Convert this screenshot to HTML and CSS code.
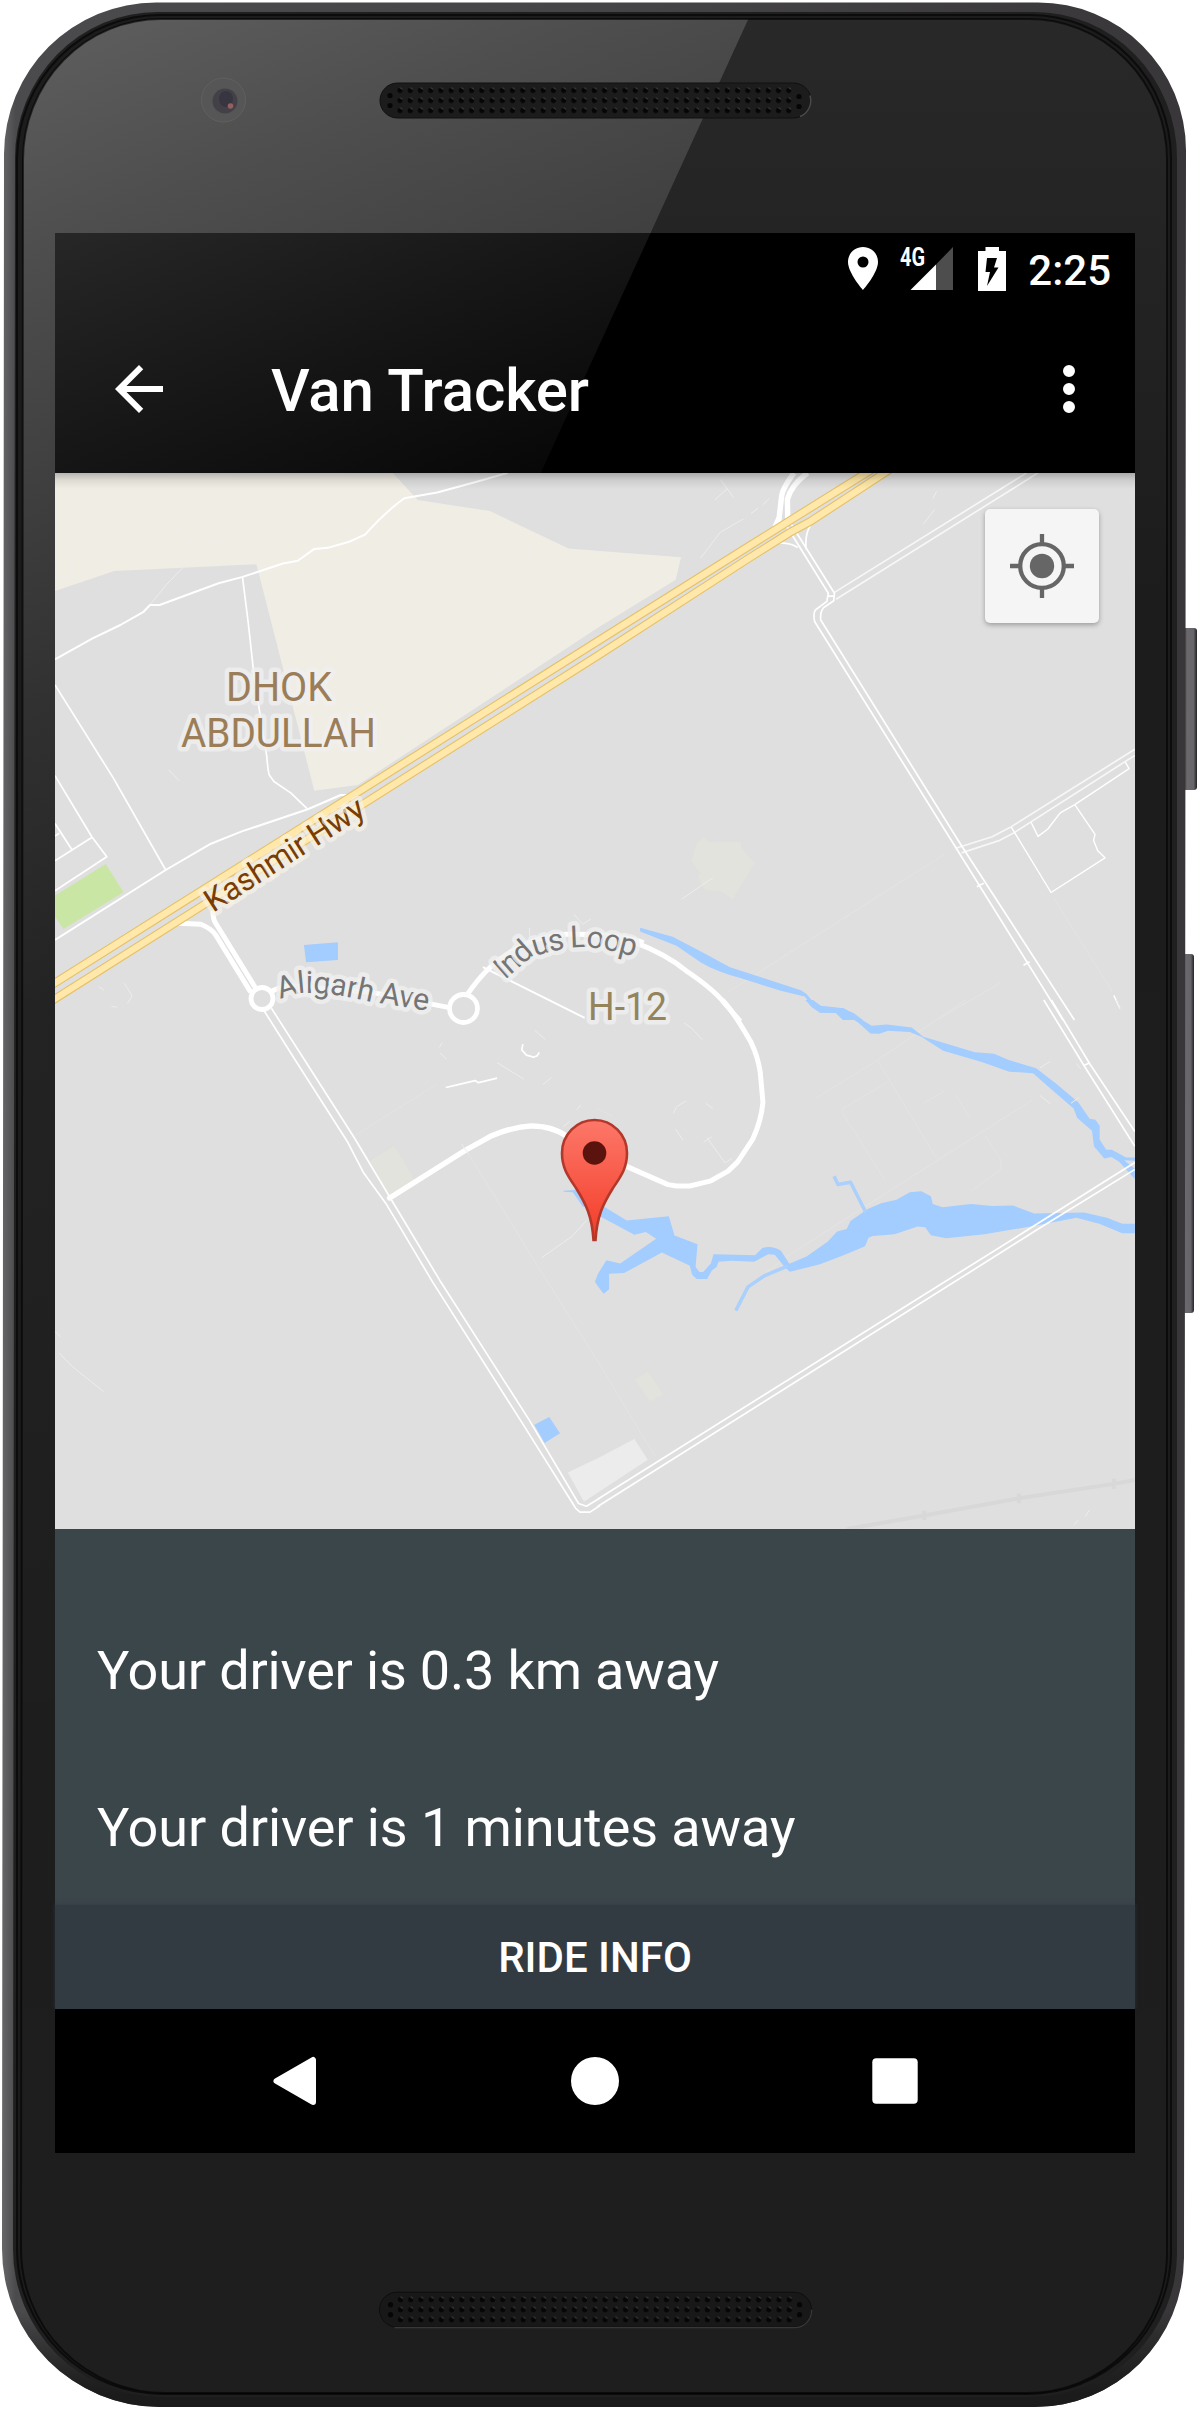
FILE: index.html
```html
<!DOCTYPE html>
<html lang="en">
<head>
<meta charset="utf-8">
<title>Van Tracker</title>
<link rel="stylesheet" href="styles.css">
</head>
<body>
<main class="phone">
  <svg class="phone-body" viewBox="0 0 1198 2409" aria-hidden="true">
    <defs>
      <linearGradient id="metal" gradientUnits="userSpaceOnUse" x1="0" y1="0" x2="1198" y2="0">
        <stop offset="0" stop-color="#6b6a6c"/><stop offset=".013" stop-color="#4b4a4c"/><stop offset=".5" stop-color="#454446"/><stop offset="1" stop-color="#383638"/>
      </linearGradient>
      <linearGradient id="foot" x1="0" y1="0" x2="0" y2="1">
        <stop offset=".96" stop-color="#111" stop-opacity="0"/><stop offset=".995" stop-color="#1c1b1c"/>
      </linearGradient>
      <linearGradient id="glass" x1="0" y1="0" x2="0" y2="1">
        <stop offset="0" stop-color="#292929"/><stop offset=".25" stop-color="#1c1c1c"/><stop offset="1" stop-color="#1e1e1f"/>
      </linearGradient>
      <linearGradient id="sheen" gradientUnits="userSpaceOnUse" x1="0" y1="0" x2="562" y2="1390">
        <stop offset="0" stop-color="#606061"/><stop offset=".052" stop-color="#5b5b5c"/><stop offset=".162" stop-color="#4e4e4f"/><stop offset=".293" stop-color="#414142"/><stop offset=".444" stop-color="#313132"/><stop offset=".633" stop-color="#232323"/><stop offset="1" stop-color="#1e1e1f"/>
      </linearGradient>
      <linearGradient id="key" x1="0" y1="0" x2="1" y2="0">
        <stop offset="0" stop-color="#3a383a"/><stop offset=".3" stop-color="#6c696d"/><stop offset=".75" stop-color="#67646a"/><stop offset="1" stop-color="#242324"/>
      </linearGradient>
      <pattern id="holes" patternUnits="userSpaceOnUse" x="394.9" y="85.3" width="10.23" height="10.05">
        <circle cx="5.1" cy="5.1" r="2.6" fill="#060606"/><path d="M5 2.6a2.4 2.4 0 0 1 2.3 1.7" fill="none" stroke="#3e3e3e" stroke-width="1"/>
      </pattern>
      <clipPath id="glass-clip"><path d="M23 160A138 141 0 0 1 161 19H1027A138 141 0 0 1 1167 160V2253A140 140 0 0 1 1027 2393H165A144 144 0 0 1 21 2249Z"/></clipPath>
    </defs>
    <rect x="1183" y="628" width="14" height="162" rx="3" fill="url(#key)"/>
    <rect x="1181" y="954" width="13" height="359" rx="3" fill="url(#key)"/>
    <path d="M4 154A152 152 0 0 1 156 2.500H1038A148 148 0 0 1 1186 150L1184 2258A150 150 0 0 1 1034 2407H160A158 158 0 0 1 2 2249Z" fill="url(#metal)"/>
    <path d="M4 154A152 152 0 0 1 156 2.500H1038A148 148 0 0 1 1186 150L1184 2258A150 150 0 0 1 1034 2407H160A158 158 0 0 1 2 2249Z" fill="url(#foot)"/>
    <path d="M15 158A143 146 0 0 1 158 12H1034A143 146 0 0 1 1177 158V2253A146 144 0 0 1 1031 2397H161A148 148 0 0 1 13 2249Z" fill="#1f1f1f"/>
    <path d="M17 158A143 145 0 0 1 160 15H1030A141 144 0 0 1 1171 158V2253A143 143 0 0 1 1028 2394H163A146 146 0 0 1 17 2249Z" fill="#1c1c1c" stroke="#0c0c0c" stroke-width="2"/>
    <g clip-path="url(#glass-clip)">
      <rect width="1198" height="2409" fill="url(#glass)"/>
      <path d="M0 0H757L100 1438V1700H0Z" fill="url(#sheen)"/>
    </g>
    <path d="M23 160A138 141 0 0 1 161 19H1027A138 141 0 0 1 1167 160V2253A140 140 0 0 1 1027 2393H165A144 144 0 0 1 21 2249Z" fill="none" stroke="#000" stroke-opacity=".6" stroke-width="2"/>
    <circle cx="223.500" cy="100" r="22" fill="#565657" stroke="#606061" stroke-width="1"/>
    <circle cx="225" cy="101" r="12.500" fill="#434147"/><ellipse cx="226" cy="99" rx="7" ry="8" fill="#37353f"/><circle cx="230.500" cy="106" r="2.800" fill="#94605f"/>
    <rect x="380" y="83" width="431" height="35" rx="17.500" fill="#1c1c1c" stroke="#101010"/>
    <path d="M800 116.500a17 17 0 0 0 10-21" fill="none" stroke="#484b4e" stroke-width="1.500"/>
    <rect x="394.900" y="85.300" width="399" height="30.150" fill="url(#holes)"/>
    <g fill="#060606"><circle cx="390" cy="95.500" r="2.600"/><circle cx="390" cy="105.500" r="2.600"/><circle cx="799" cy="96.500" r="2.600"/><circle cx="799" cy="106.500" r="2.600"/></g>
    <g transform="translate(.5 2209.200)">
      <rect x="379" y="83" width="432" height="35" rx="17.500" fill="#181818" stroke="#0e0e0e"/>
      <path d="M394 118.500H794a17 17 0 0 0 17-18" fill="none" stroke="#383839" stroke-width="1.300"/>
      <rect x="394.900" y="85.300" width="399" height="30.150" fill="url(#holes)"/>
      <g fill="#060606"><circle cx="390" cy="95.500" r="2.600"/><circle cx="390" cy="105.500" r="2.600"/><circle cx="799" cy="95.500" r="2.600"/><circle cx="799" cy="105.500" r="2.600"/></g>
    </g>
  </svg>

  <div class="screen">
    <header class="header">
      <div class="status">
        <svg width="30" height="43" viewBox="0 0 30 43"><path fill="#fff" fill-rule="evenodd" d="M15 0C6.500 0 0 6.600 0 15C0 26 15 43 15 43S30 26 30 15C30 6.600 23.500 0 15 0ZM15 9.500A5.500 5.500 0 1 1 15 20.500A5.500 5.500 0 1 1 15 9.500Z"/></svg>
        <svg class="signal" width="53" height="43" viewBox="0 0 53 43"><path fill="#4d4d4d" d="M36 17.500L53 0V43H36Z"/><path fill="#fff" d="M10.500 43L36 17.500V43Z"/><text class="net" x="0" y="18.500" textLength="25" lengthAdjust="spacingAndGlyphs">4G</text></svg>
        <svg class="battery" width="28" height="44" viewBox="0 0 28 44"><path fill="#fff" d="M0 4H7.500V0H21V4H28V44H0Z"/><path fill="#000" d="M9 11H19L16 20.500H20.500L9 39L12 25H7.500Z"/></svg>
        <span class="clock">2:25</span>
      </div>
      <div class="toolbar">
        <svg class="back" width="72" height="72" viewBox="0 0 24 24"><path fill="#fff" d="M20 11H7.830l5.590-5.590L12 4l-8 8 8 8 1.410-1.410L7.830 13H20v-2z"/></svg>
        <h1 class="title">Van Tracker</h1>
        <svg class="more" width="72" height="72" viewBox="0 0 24 24"><path fill="#fff" d="M12 8a2 2 0 1 0 0-4 2 2 0 0 0 0 4zm0 2a2 2 0 1 0 0 4 2 2 0 0 0 0-4zm0 6a2 2 0 1 0 0 4 2 2 0 0 0 0-4z"/></svg>
      </div>
    </header>

    <section class="map">
      <svg class="map-canvas" viewBox="55 473 1080 1056">
        <defs>
          <linearGradient id="pin" x1="0" y1="0" x2="0" y2="1"><stop offset="0" stop-color="#fc7869"/><stop offset=".75" stop-color="#f64b38"/><stop offset="1" stop-color="#ee3e2c"/></linearGradient>
          <path id="p-kash" d="M213 913L380 806"/>
          <path id="p-ali" d="M280 999L298 993.500Q318 990 367 1001L442 1013"/>
          <path id="p-ind" d="M505 980L529 959Q548 950.500 575 947.500Q603 945 660 965"/>
        </defs>

        <!-- north-west tile -->
        <g class="tile" transform="translate(40 460) scale(.35714)">
          <path class="land" d="M42 30H982L1058 112L1260 143L1480 248L1568 255L1795 272L1780 335L1562 470L890 910L768 926L606 292L208 311L42 367Z"/>
          <path class="park" d="M30 1227L184 1131L234 1210L66 1313L30 1262Z"/>
          <path class="water" d="M739 1358L834 1350V1400L745 1406Z"/>
          <path class="road w2" d="M42 558L146 500L225 462L290 425L308 406H335L500 345L565 328L680 290L722 282L768 249L805 246L866 229L910 209C940 175 975 140 1020 107L1112 91L1215 63L1310 36"/>
          <path class="road w15" d="M567 328L583 455L600 610L635 830Q638 870 642 882L655 900L702 932L750 978"/>
          <path class="road w2" d="M42 1344L352 1148L475 1076L565 1040L750 978L842 938H880"/>
          <path class="road w15" d="M42 630L205 890L352 1148M42 884L145 1055L187 1111L42 1206M42 1018L90 1092M42 1122L145 1057M42 1053L54 1045"/>
          <path class="faint" d="M240 72L182 115M675 122L642 152M380 187L435 265M550 194L445 250M435 265L355 348L310 403M152 190L136 215M97 285L88 300L94 345M360 868L390 898M1350 215L1398 305M165 1475L180 1485M236 1465L258 1500L245 1522M200 1530L215 1532"/>
          <path class="road w45" d="M388 1297L450 1300Q480 1312 492 1330L590 1490M484 1262Q484 1285 492 1297L607 1484"/>
          <path class="road w2" d="M1240 1420L1525 1562"/>
          <path class="road w45" d="M640 1492Q670 1475 700 1472L925 1490L1150 1534M1196 1497Q1250 1420 1300 1390Q1380 1330 1490 1327L1568 1330Q1650 1335 1690 1352"/>
          <path class="faint" d="M1370 1310L1372 1340M1495 1272L1520 1300L1542 1285"/>
        </g>

        <!-- north-east tile -->
        <g class="tile" transform="translate(598 460) scale(.38265 .35714)">
          <path class="scrub" d="M256 1078L275 1055L290 1070H374V1085L410 1128L352 1230L320 1207L280 1205L260 1165L268 1158L244 1125Z"/>
          <path class="road w5" d="M512 36Q482 80 480 100L472 175M548 36Q505 70 495 110L496 170M474 160L462 190"/>
          <path class="road w15" d="M490 180L602 373L598 396L568 420Q562 430 566 452L935 1085L1215 1568M505 180L618 373L616 394L590 413Q580 425 582 448L950 1080L1245 1568M602 381H618M470 232Q505 232 522 245M555 183Q540 210 544 250M990 1195L1008 1185M1112 1415L1128 1405"/>
          <path class="road soft w15" d="M616 372L1120 36M622 390L1150 36"/>
          <path class="road soft w15" d="M935 1087L1030 1055L1075 1030L1403 810M950 1100L1050 1065L1090 1042L1403 827"/>
          <path class="road w1" d="M1080 1028L1184 1211L1325 1114L1306 1094L1295 1065L1299 1048L1246 965L1388 864L1378 846M1246 965L1208 988L1175 1034L1150 1054L1132 1015M1348 1499L1364 1536"/>
          <path class="faint" d="M320 55L355 106M338 80L305 112M447 108L430 126M418 135L400 150M380 165L320 202L268 275M885 88L875 108M880 138L850 180M300 1170L218 1230"/>
          <path class="hair" d="M905 1105L800 1175L340 1490M1190 1225L1345 1490M1050 1465L890 1565"/>
          <path class="water" d="M110 1310L195 1335L270 1377L345 1420L430 1450L530 1485L545 1495L560 1515L585 1532L640 1535L670 1550L692 1568H640L620 1547L580 1547Q560 1530 540 1502L480 1487L370 1450Q310 1433 270 1408L205 1360L110 1320Z"/>
          <path class="road w4" d="M95 1350Q180 1385 230 1430Q300 1480 330 1520L372 1572"/>
        </g>

        <!-- south-west tile -->
        <g class="tile" transform="translate(40 1000) scale(.35714 .34439)">
          <path class="scrub" d="M924 467L992 424L1048 520L978 566Z"/>
          <path class="water" d="M1384 1233L1426 1211L1456 1258L1413 1286Z"/>
          <path class="block" d="M1478 1372L1570 1326L1664 1275L1702 1335L1523 1457Z"/>
          <path class="road w15" d="M628 32L715 175L860 410L905 500L968 590L1100 820L1350 1228L1500 1476L1512 1487H1540L1568 1468M648 24L735 165L880 400L978 570L1120 815L1370 1220L1508 1462L1530 1470L1568 1446"/>
          <path class="road w5" stroke-linecap="round" d="M979 575L1190 437L1265 394Q1325 368 1375 366Q1430 365 1475 395"/>
          <path class="road w15" d="M1136 254L1165 247L1218 234L1228 240L1280 227M1352 128L1349 145L1362 160L1382 166L1392 162L1398 152"/>
          <path class="faint" d="M1126 124L1118 138M1120 153L1138 172M1280 182L1355 230M1432 225L1408 246M1385 88L1415 115M1515 305L1503 318M1483 352L1465 368M42 962L58 978M54 1025L90 1064L178 1137M1530 640L1490 686L1405 748M1180 418L1200 447"/>
          <path class="hair" d="M880 395L1110 245M1200 447L1380 750L1568 1060"/>
          <path class="water" d="M1466 554L1500 552L1540 600H1520L1492 558L1466 557Z"/>
        </g>

        <!-- south-east tile -->
        <g class="tile" transform="translate(598 1000) scale(.38265 .34439)">
          <path class="scrub" d="M97 1102L130 1079L171 1145L136 1166Z"/>
          <path class="hair" d="M0 1050L130 1290L150 1325M960 0L730 175L570 285M730 175L885 460M755 240L640 315L640 330L748 520M905 265L850 300M935 275L970 340M1135 290L500 740L440 790M1012 395L1053 465V492L975 555M0 315L40 340"/>
          <path class="faint" d="M225 67L245 82L272 115M282 300L300 316M297 397L276 413M285 400L332 473L350 460M230 293L205 310L197 330M203 375L222 407M1182 178L1155 197M1155 277L1183 302M1250 185L1262 200M1355 0L1364 24M1285 1480L1273 1500M1256 1510L1243 1524"/>
          <path class="water" d="M542 0L558 20L580 37L640 38L680 65L712 97L735 98L758 89L815 93L845 107L902 147L1003 180L1075 208L1137 213L1180 255L1243 315L1252 342L1291 380L1296 425L1323 460L1342 456L1362 470L1403 520V490L1375 465L1403 467V457L1380 457L1343 435H1328L1311 405V365L1300 348L1285 345L1255 297L1200 245L1145 198L1075 175L1035 156L985 152L850 107L820 80L755 71L715 75L642 24L582 17L562 0Z"/>
          <path class="water" d="M0 588L18 602L75 640L185 628L200 684L260 709L255 775L265 790H275L295 765L302 738L410 741L430 720Q455 712 478 728L500 766L545 745L600 702L625 672L650 665L660 642L705 607L740 590L780 580L815 558L845 555L870 570L875 592L900 602L975 592L1030 598L1085 597L1140 620L1270 617L1330 632L1370 650H1403V677H1370L1310 650L1250 632L1145 655L1010 680L910 692L870 683L855 660L835 658L775 680L718 685L707 690L698 715L640 742L580 767L502 789L490 778L462 740L445 738L408 760L350 757L315 760L310 775L298 785L285 810H258L246 798L240 772L167 733L68 793L29 795V840L15 853L0 832L-8 818L0 795L22 756L58 765L152 693L125 674L95 682L0 625Z"/>
          <path class="stream" d="M617 512L627 536L660 529L700 617M495 773L436 800L392 833L360 902"/>
          <path class="road w4" d="M325 0Q355 35 400 123Q418 165 424 210L431 297Q427 350 404 405L365 470L340 497L295 525L240 540H205L183 536L70 481"/>
          <path class="road w15" d="M1165 0L1270 190L1403 425M1185 0L1285 185L1403 382M1270 190L1285 182"/>
          <path class="road w15" d="M1403 472L1145 652L0 1449M1403 492L1165 655L0 1470"/>
          <path class="faint" d="M1236 300L1258 282"/>
          <path class="rail" d="M650 1536L853 1497L1100 1447L1348 1405L1403 1394M853 1483V1510M1100 1433V1461M1348 1390V1419"/>
        </g>

        <!-- Kashmir Hwy carriageways and the roundabouts -->
        <path class="hwy-edge" d="M50 986L598 641L750 545.500L875 467.500M50 1002L598 655.500L750 557.500L789 533L811 521L892 468"/>
        <path class="hwy" d="M50 986L598 641L750 545.500L875 467.500M50 1002L598 655.500L750 557.500L789 533L811 521L892 468"/>
        <circle class="ring" cx="262" cy="998.500" r="11"/>
        <circle class="ring" cx="463.500" cy="1008.500" r="14"/>

        <text class="label area" x="226" y="701" textLength="106" lengthAdjust="spacingAndGlyphs">DHOK</text>
        <text class="label area" x="181" y="747" textLength="195" lengthAdjust="spacingAndGlyphs">ABDULLAH</text>
        <text class="label area sector" x="588" y="1020" textLength="79" lengthAdjust="spacingAndGlyphs">H-12</text>
        <text class="label hwy-name"><textPath href="#p-kash">Kashmir Hwy</textPath></text>
        <text class="label street"><textPath href="#p-ali">Aligarh Ave</textPath></text>
        <text class="label street loop"><textPath href="#p-ind">Indus Loop</textPath></text>

        <path d="M594.500 1120A32.500 33 0 0 0 562 1153C562 1168 568 1176 576 1188C586 1204 592 1216 593.500 1240H595.500C597 1216 603 1204 613 1188C621 1176 627 1168 627 1153A32.500 33 0 0 0 594.500 1120Z" fill="url(#pin)" stroke="#b3382a" stroke-width="2.600"/>
        <circle cx="594.500" cy="1153" r="11.800" fill="#5a140d"/>
      </svg>
      <button class="locate" aria-label="My location">
        <svg width="66" height="66" viewBox="-33 -33 66 66"><circle r="12.200" fill="#666"/><g fill="none" stroke="#666" stroke-width="4.300"><circle r="21.800"/><path d="M0-32V-23M0 23V32M-32 0H-23M23 0H32"/></g></svg>
      </button>
    </section>

    <section class="info">
      <p class="line">Your driver is 0.3 km away</p>
      <p class="line">Your driver is 1 minutes away</p>
      <button class="ride">RIDE INFO</button>
    </section>

    <nav class="nav">
      <svg width="48" height="50" viewBox="0 0 48 50"><path d="M6 25L42.500 4V46Z" transform="translate(-.5 0)" fill="#fff" stroke="#fff" stroke-width="6" stroke-linejoin="round"/></svg>
      <svg width="48" height="48" viewBox="0 0 48 48"><circle cx="24" cy="24" r="24" fill="#fff"/></svg>
      <svg width="48" height="48" viewBox="0 0 48 48"><rect x="1.300" y="1.300" width="45.400" height="45.400" rx="4" fill="#fff"/></svg>
    </nav>
  </div>
</main>
</body>
</html>
```
FILE: styles.css
```css
* { box-sizing: border-box; }

body {
  margin: 0;
  background: #fff;
  font-family: Roboto, sans-serif;
  color: #fff;
}

.phone {
  display: grid;
  width: 1198px;
  height: 2409px;
  overflow: hidden;
}

.phone-body,
.screen { grid-area: 1 / 1; }

.phone-body {
  display: block;
  width: 1198px;
  height: 2409px;
}

.screen {
  display: flex;
  flex-direction: column;
  width: 1080px;
  height: 1920px;
  margin: 233px 0 0 55px;
  z-index: 1;
}

svg { display: block; flex: none; }

/* Header */
.header {
  height: 240px;
  background:
    linear-gradient(114.6deg, transparent 541px, #000 542px),
    linear-gradient(158deg, #272727 0, #161616 212px, #080808 400px);
}

.status {
  display: flex;
  align-items: flex-start;
  justify-content: flex-end;
  height: 72px;
  padding: 14px 24px 0 0;
}

.signal { margin-left: 22px; overflow: visible; }
.battery { margin-left: 25px; }

.net {
  font-size: 25px;
  font-weight: 700;
  fill: #fff;
}

.clock {
  margin: -1px 0 0 22px;
  font-size: 42px;
  font-weight: 500;
  line-height: 49px;
}

.toolbar {
  display: flex;
  align-items: center;
  height: 168px;
  padding: 0 30px 0 48px;
}

.title {
  flex: 1;
  margin: 4px 0 0 96px;
  font-size: 60px;
  font-weight: 500;
  line-height: 70px;
  letter-spacing: -.1px;
}

/* Map */
.map {
  position: relative;
  height: 1056px;
  overflow: hidden;
  background: #dfdfdf;
}

.map::after {
  content: "";
  position: absolute;
  inset: 0 0 auto;
  height: 16px;
  background: linear-gradient(rgba(0, 0, 0, .24), rgba(0, 0, 0, .08) 45%, transparent);
}

.map-canvas { width: 1080px; height: 1056px; }

.tile path { vector-effect: non-scaling-stroke; }
.land { fill: #f0ede4; }
.park { fill: #cae6a4; }
.water { fill: #a3ccff; }
.scrub { fill: #e2e3dc; }
.block { fill: #ececec; }

.road, .faint, .hair, .stream, .rail { fill: none; stroke-linejoin: round; }
.road { stroke: #fff; }
.soft { opacity: .75; }
.w1 { stroke-width: 1.4px; }
.w15 { stroke-width: 1.7px; }
.w2 { stroke-width: 2px; }
.w4 { stroke-width: 5px; }
.w45 { stroke-width: 5px; }
.w5 { stroke-width: 5.4px; }
.faint { stroke: #ededed; stroke-width: 1px; }
.hair { stroke: #e4e4e4; stroke-width: 1px; }
.stream { stroke: #abd0fb; stroke-width: 3.5px; }
.rail { stroke: #d8d8d8; stroke-width: 4px; }
.hwy-edge { fill: none; stroke: #e5c168; stroke-width: 8.6px; }
.hwy { fill: none; stroke: #ffe8a9; stroke-width: 6.4px; }
.ring { fill: #dfdfdf; stroke: #fff; stroke-width: 4.8px; }

.label {
  paint-order: stroke;
  stroke: rgba(240, 240, 240, .8);
  stroke-width: 9px;
  stroke-linejoin: round;
}

.area { font-size: 40px; fill: #9b7e58; }
.sector { font-size: 38px; fill: #93845b; }
.hwy-name { font-size: 32px; fill: #793c02; stroke: rgba(248, 244, 232, .65); letter-spacing: -.5px; }
.street { font-size: 30.5px; fill: #757575; letter-spacing: -.3px; }
.loop { letter-spacing: -1.2px; }

.locate {
  position: absolute;
  top: 36px;
  right: 36px;
  display: grid;
  place-items: center;
  width: 114px;
  height: 114px;
  padding: 0;
  border: 0;
  border-radius: 5px;
  background: #f5f5f5;
  box-shadow: 0 2px 5px rgba(0, 0, 0, .3);
}

/* Driver info */
.info {
  display: flex;
  flex-direction: column;
  height: 480px;
  padding-top: 110px;
  background: #3b464b;
}

.line {
  margin: 0 0 94px;
  padding-left: 42px;
  font-size: 54px;
  line-height: 63px;
  letter-spacing: -.17px;
}

.ride {
  height: 104px;
  margin-top: auto;
  padding: 0;
  border: 0;
  background: #313b41;
  box-shadow: 0 -1px 4px rgba(49, 59, 65, .7);
  color: #fff;
  font: 500 42px/49px Roboto, sans-serif;
}

.info .line + .line { margin-bottom: 0; letter-spacing: -.1px; }

/* System navigation */
.nav {
  display: flex;
  align-items: center;
  justify-content: center;
  gap: 252px;
  height: 144px;
  background: #000;
}
```
